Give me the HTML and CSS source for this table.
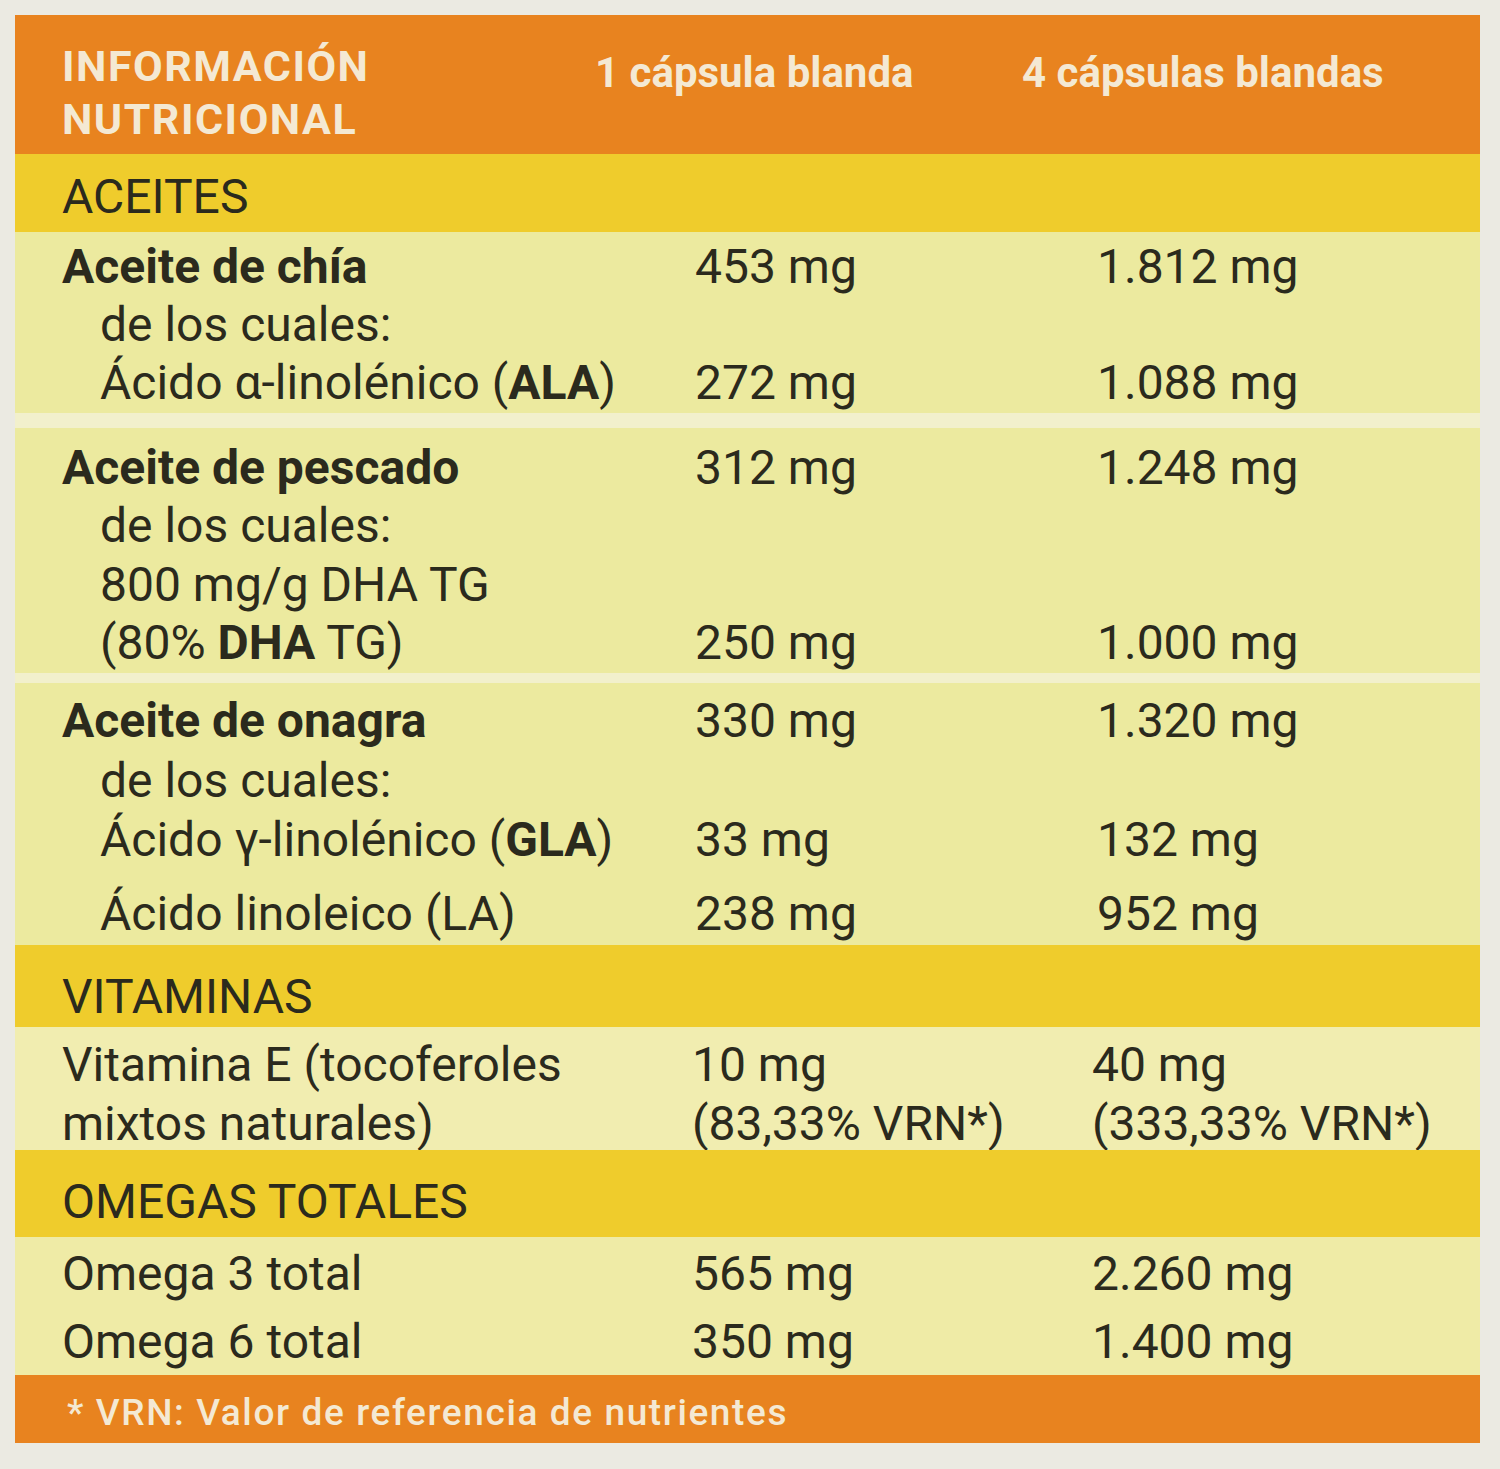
FILE: index.html
```html
<!DOCTYPE html>
<html lang="es">
<head>
<meta charset="utf-8">
<title>Información nutricional</title>
<link rel="stylesheet" href="styles.css">
</head>
<body>
<div class="page">
  <div class="table">
    <div class="head">
      <div class="head-title">INFORMACIÓN<br>NUTRICIONAL</div>
      <div class="head-col">1 cápsula blanda</div>
      <div class="head-col">4 cápsulas blandas</div>
    </div>

    <div class="band band-aceites">ACEITES</div>

    <div class="block block-chia">
      <div class="c1 b">Aceite de chía</div><div class="c2">453 mg</div><div class="c3">1.812 mg</div>
      <div class="c1 ind">de los cuales:</div><div></div><div></div>
      <div class="c1 ind">Ácido α-linolénico (<b>ALA</b>)</div><div class="c2">272 mg</div><div class="c3">1.088 mg</div>
    </div>

    <div class="block block-pescado">
      <div class="c1 b">Aceite de pescado</div><div class="c2">312 mg</div><div class="c3">1.248 mg</div>
      <div class="c1 ind">de los cuales:</div><div></div><div></div>
      <div class="c1 ind">800 mg/g DHA TG</div><div></div><div></div>
      <div class="c1 ind">(80% <b>DHA</b> TG)</div><div class="c2">250 mg</div><div class="c3">1.000 mg</div>
    </div>

    <div class="block block-onagra">
      <div class="c1 b">Aceite de onagra</div><div class="c2">330 mg</div><div class="c3">1.320 mg</div>
      <div class="c1 ind">de los cuales:</div><div></div><div></div>
      <div class="c1 ind">Ácido γ-linolénico (<b>GLA</b>)</div><div class="c2">33 mg</div><div class="c3">132 mg</div>
      <div class="c1 ind last">Ácido linoleico (LA)</div><div class="c2 last">238 mg</div><div class="c3 last">952 mg</div>
    </div>

    <div class="band band-vit">VITAMINAS</div>

    <div class="block block-vite">
      <div class="c1">Vitamina E (tocoferoles</div><div class="c2 v">10 mg</div><div class="c3 v">40 mg</div>
      <div class="c1">mixtos naturales)</div><div class="c2 v">(83,33% VRN*)</div><div class="c3 v">(333,33% VRN*)</div>
    </div>

    <div class="band band-omegas">OMEGAS TOTALES</div>

    <div class="block block-omegas">
      <div class="c1">Omega 3 total</div><div class="c2 v">565 mg</div><div class="c3 v">2.260 mg</div>
      <div class="c1">Omega 6 total</div><div class="c2 v">350 mg</div><div class="c3 v">1.400 mg</div>
    </div>

    <div class="foot">* VRN: Valor de referencia de nutrientes</div>
  </div>
</div>
</body>
</html>
```

FILE: styles.css
```css
html, body {
  margin: 0;
  padding: 0;
  background: #ebeae2;
}

body {
  font-family: Roboto, "Liberation Sans", sans-serif;
  color: #2b2a1d;
}

.page {
  width: 1500px;
  height: 1469px;
  padding: 15px 20px 0 15px;
  box-sizing: border-box;
}

.table {
  width: 1465px;
  background: #f2f0cc;
  display: flex;
  flex-direction: column;
}

.head {
  background: #e8831f;
  color: #f4e9d3;
  font-weight: 700;
  font-size: 43px;
  height: 139px;
  box-sizing: border-box;
  padding: 25px 0 0 47px;
  display: grid;
  grid-template-columns: 533px 427px 1fr;
  line-height: 53px;
}

.head-title {
  letter-spacing: 1.5px;
}

.head-col {
  padding-top: 6px;
  font-size: 42px;
}

.band {
  background: #efcc2c;
  font-size: 48px;
  line-height: 56px;
  padding-left: 47px;
  box-sizing: border-box;
}

.band-aceites {
  height: 78px;
  padding-top: 15px;
}

.band-vit {
  height: 82px;
  padding-top: 24px;
}

.band-omegas {
  height: 87px;
  padding-top: 24px;
}

.block {
  background: #ecea9f;
  font-size: 48px;
  line-height: 56px;
  display: grid;
  grid-template-columns: 633px 402px 1fr;
  padding-left: 47px;
  box-sizing: border-box;
}

.b {
  font-weight: 700;
}

.ind {
  padding-left: 38px;
}

.block-chia {
  height: 181px;
  padding-top: 7px;
}

.block-pescado {
  margin-top: 15px;
  height: 245px;
  padding-top: 12px;
}

.block-onagra {
  margin-top: 10px;
  height: 262px;
  padding-top: 10px;
}

.block-onagra .last {
  margin-top: 14px;
}

.block-vite {
  background: #f1edb0;
  height: 123px;
  padding-top: 8px;
  line-height: 59px;
}

.block-omegas {
  background: #efeba6;
  height: 138px;
  padding-top: 3px;
  line-height: 68px;
}

.v {
  margin-left: -3px;
}

.block-vite .c3,
.block-omegas .c3 {
  margin-left: -5px;
}

.foot {
  background: #e8831f;
  color: #f4e9d3;
  font-weight: 500;
  font-size: 37px;
  line-height: 40px;
  letter-spacing: 1.6px;
  height: 68px;
  box-sizing: border-box;
  padding: 18px 0 0 52px;
}
```
